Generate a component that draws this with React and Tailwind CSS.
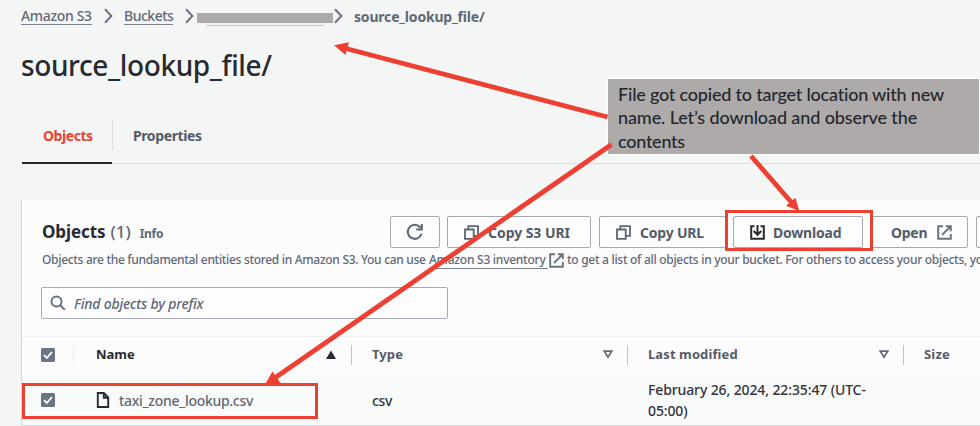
function Chevron({ className }) {
  return (
    <svg width="9" height="16" viewBox="0 0 9 16" fill="none" stroke="#6b7380" strokeWidth="2" className={className}>
      <path d="M1 1.2 7.4 8 1 14.8" />
    </svg>
  );
}

function CopyIcon() {
  return (
    <svg width="15" height="15" viewBox="0 0 15 15" fill="none" stroke="#5c6573" strokeWidth="1.8">
      <path d="M1 4.5h8.7v9.3H1zM4.3 4V1.2H14v9.6h-3.8" />
    </svg>
  );
}

function ExternalIcon({ className }) {
  return (
    <svg width="15" height="15" viewBox="0 0 15 15" fill="none" stroke="#69727f" strokeWidth="1.9" className={className}>
      <path d="M6 1.2H1.2v12.6h12.6V9M8.8 1.2h5v5M13.6 1.4 5 10" />
    </svg>
  );
}

function Checkbox() {
  return (
    <svg width="14" height="14" viewBox="0 0 14 14" className="shrink-0">
      <rect width="14" height="14" rx="1.5" fill="#6b7583" />
      <path d="M3 7.2 5.8 10 11 4" fill="none" stroke="#fff" strokeWidth="1.8" />
    </svg>
  );
}

function Button({ className, children }) {
  return (
    <div className={`flex h-8 shrink-0 items-center rounded-[2px] border border-[#a5a9b3] bg-[#fdfdfd] text-[14px] font-bold whitespace-nowrap text-[#545b68] ${className}`}>
      {children}
    </div>
  );
}

function SortDown() {
  return (
    <svg width="10" height="9" viewBox="0 0 10 9" fill="none" stroke="#5f6876" strokeWidth="1.7">
      <path d="M1.3 1.2h7.4L5 7.2z" />
    </svg>
  );
}

function Annotations() {
  return (
    <>
      <div className="absolute top-[79px] left-[608px] h-[75px] w-[371px] bg-[#aeaaa9] pt-1 pl-[10px] font-['Lato',sans-serif] text-[18px] leading-[23.4px] font-medium whitespace-nowrap text-[#23262c] outline-1 outline-white">
        <div className="tracking-[-0.2px]">File got copied to target location with new</div>
        <div className="tracking-[-0.1px]">name. Let’s download and observe the</div>
        <div className="tracking-[-0.25px]">contents</div>
      </div>
      <div className="absolute top-[210px] left-[725px] h-[41px] w-[148px] border-3 border-[#ed4032]" />
      <div className="absolute top-[383px] left-[22px] h-9 w-[296px] border-3 border-[#ed4032]" />
      <svg width="980" height="426" viewBox="0 0 980 426" className="absolute top-0 left-0" stroke="#ed4032" fill="#ed4032" strokeWidth="4.8">
        <path d="M607.5 117 344 48M611.5 144.5 274 378.5M751 156 792 203" />
        <path stroke="none" d="M334 45.3 349 42.3 345.5 55zM265 384.5 272.5 371.5 280.5 383zM799.3 211 786 205.8 795.5 197.8z" />
      </svg>
    </>
  );
}

export default function App() {
  return (
    <div className="relative h-[426px] w-[980px] overflow-hidden bg-[#f4f6f6] font-['Noto_Sans',sans-serif] text-[#5f6876]">
      <nav className="flex h-8 items-center pl-[21px] text-[14px] leading-[17px] whitespace-nowrap">
        <span className="w-[71px] border-b border-[#7b838f] font-medium tracking-[-0.35px]">Amazon S3</span>
        <Chevron className="ml-3" />
        <span className="ml-[11px] w-[49px] border-b border-[#7b838f] font-medium tracking-[-0.5px]">Buckets</span>
        <Chevron className="ml-3" />
        <span className="mt-[7px] ml-[3px] flex h-[13px] w-[136px] flex-col items-center justify-between">
          <span className="h-[10px] w-full bg-[#aeaaa9]" />
          <span className="h-px w-[118px] bg-[#c3c7cc]" />
        </span>
        <Chevron className="ml-[1px]" />
        <span className="ml-[11px] text-[14px] font-bold tracking-[-0.19px]">source_lookup_file/</span>
      </nav>

      <h1 className="mt-3 h-11 pl-[21px] text-[28px] leading-[42px] font-medium tracking-[-0.39px] whitespace-nowrap text-[#272a30]">source_lookup_file/</h1>

      <div className="mt-[28px] ml-[22px] flex h-12 border-b border-[#dcdfe3] text-[14px] font-bold">
        <div className="-mb-px h-12 w-[90px] border-b-2 border-[#272a30] pl-[21px] leading-[39px] tracking-[-0.45px] text-[#ed4032]">Objects</div>
        <div className="mt-1 h-[30px] border-l border-[#dcdfe3] pl-5 leading-[31px] tracking-[-0.4px] text-[#545b68]">Properties</div>
      </div>

      <main className="mt-9 ml-[21px] h-[226px] border-l border-[#d3d6da] bg-[#fcfcfc]">
        <div className="flex h-12 items-end pl-5">
          <h2 className="flex h-8 w-[348px] shrink-0 items-center text-[17px] whitespace-nowrap">
            <span className="font-bold tracking-[-0.1px] text-[#272a30]">Objects</span>
            <span className="ml-[5px] font-medium">(1)</span>
            <span className="mt-1 ml-[9px] text-[12px] font-bold tracking-[-0.3px]">Info</span>
          </h2>
          <Button className="w-[50px] justify-center">
            <svg width="18" height="18" viewBox="0 0 18 18" fill="none" stroke="#5c6573" strokeWidth="2">
              <path d="M15.5 10.8A7 7 0 1 1 14.5 4.8M15.8 1v5.5h-5.5" />
            </svg>
          </Button>
          <Button className="ml-[7px] w-[144px] gap-[9px] pl-4">
            <CopyIcon />
            <span className="tracking-[-0.05px]">Copy S3 URI</span>
          </Button>
          <Button className="ml-2 w-[127px] gap-[9px] pl-4">
            <CopyIcon />
            <span className="tracking-[-0.2px]">Copy URL</span>
          </Button>
          <Button className="ml-[7px] w-[130px] gap-2 border-[#767b84] pl-4 text-[#272a30]">
            <svg width="15" height="15" viewBox="0 0 15 15" fill="none" stroke="#272a30" strokeWidth="2">
              <path d="M4.5 1.2H1.2v12.6h12.6V1.2h-3.3M7.5 0v9.5M3.7 6l3.8 3.8L11.3 6" />
            </svg>
            <span className="tracking-[-0.2px]">Download</span>
          </Button>
          <Button className="ml-2 w-[97px] gap-[10px] pl-[19px]">
            <span className="tracking-[-0.3px]">Open</span>
            <ExternalIcon />
          </Button>
          <Button className="ml-2 w-20" />
        </div>

        <p className="flex h-6 items-center pl-5 text-[12px] font-medium whitespace-nowrap">
          <span className="w-[387px] shrink-0 tracking-[-0.31px]">Objects are the fundamental entities stored in Amazon S3. You can use</span>
          <span className="h-[18px] w-[119px] shrink-0 border-b border-[#7b838f] leading-[17px] tracking-[-0.25px]">Amazon S3 inventory</span>
          <ExternalIcon className="ml-px shrink-0" />
          <span className="ml-[3px] tracking-[-0.29px]">to get a list of all objects in your bucket. For others to access your objects, yo</span>
        </p>

        <div className="mt-[15px] ml-[19px] flex h-8 w-[407px] items-center rounded-[2px] border border-[#a5a9b3] bg-[#fdfdfd] pl-2">
          <svg width="16" height="16" viewBox="0 0 16 16" fill="none" stroke="#69727f" strokeWidth="2">
            <circle cx="6.5" cy="6.5" r="5" />
            <path d="m10.3 10.3 4.6 4.6" />
          </svg>
          <span className="ml-2 text-[14px] font-medium tracking-[-0.2px] italic">Find objects by prefix</span>
        </div>

        <div className="mt-[17px] flex h-9 items-center border-t border-[#eef0f1] text-[13px] font-bold text-[#545b68]">
          <div className="flex h-5 w-[52px] items-center border-r border-[#eceef0] pl-[19px]">
            <Checkbox />
          </div>
          <div className="flex h-5 w-[278px] items-center justify-between border-r border-[#c0c4ca] pr-[15px] pl-[22px]">
            <span className="text-[#272a30]">Name</span>
            <svg width="10" height="9" viewBox="0 0 10 9" fill="#272a30">
              <path d="M5 .5 10 9H0z" />
            </svg>
          </div>
          <div className="flex h-5 w-[276px] items-center justify-between border-r border-[#c0c4ca] pr-[14px] pl-5">
            <span className="tracking-[0.1px]">Type</span>
            <SortDown />
          </div>
          <div className="flex h-5 w-[276px] items-center justify-between border-r border-[#c0c4ca] pr-[14px] pl-5">
            <span className="tracking-[0.1px]">Last modified</span>
            <SortDown />
          </div>
          <div className="pl-5 tracking-[0.2px]">Size</div>
        </div>

        <div className="mt-[1px] flex h-[53px] items-center border-b border-[#dcdfe3] bg-[#f9fafa] pt-[2px] text-[14px]">
          <div className="w-[74px] shrink-0 pl-[19px]">
            <Checkbox />
          </div>
          <div className="flex w-[276px] shrink-0 items-center">
            <svg width="14" height="16" viewBox="0 0 14 16" fill="none" stroke="#272a30" strokeWidth="1.9">
              <path d="M1.8 1h6l4.4 4.5V15H1.8zM7.8 1v4.7h4.4" />
            </svg>
            <span className="ml-[9px] font-medium tracking-[-0.3px]">taxi_zone_lookup.csv</span>
          </div>
          <div className="w-[276px] shrink-0 font-medium tracking-[-0.4px] text-[#30343b]">csv</div>
          <div className="leading-[21px] font-medium tracking-[-0.12px] whitespace-nowrap text-[#30343b]">
            February 26, 2024, 22:35:47 (UTC-
            <br />
            05:00)
          </div>
        </div>
      </main>

      <Annotations />
    </div>
  );
}
